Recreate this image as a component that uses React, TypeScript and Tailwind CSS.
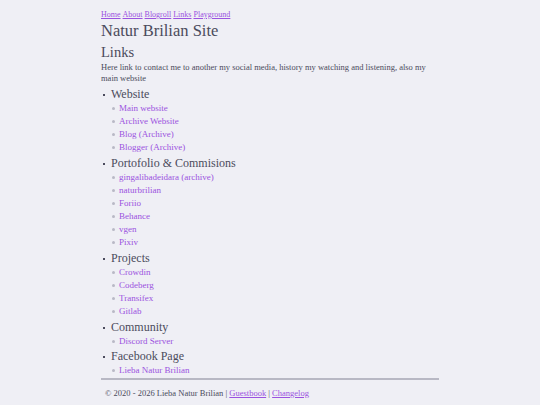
import React from "react";

const sections: { title: string; items: string[] }[] = [
  { title: "Website", items: ["Main website", "Archive Website", "Blog (Archive)", "Blogger (Archive)"] },
  {
    title: "Portofolio & Commisions",
    items: ["gingalibadeidara (archive)", "naturbrilian", "Foriio", "Behance", "vgen", "Pixiv"],
  },
  { title: "Projects", items: ["Crowdin", "Codeberg", "Transifex", "Gitlab"] },
  { title: "Community", items: ["Discord Server"] },
  { title: "Facebook Page", items: ["Lieba Natur Brilian"] },
];

export default function App() {
  return (
    <div
      className="min-h-screen w-full bg-[#efeff5] text-[#4b4b5c]"
      style={{ fontFamily: '"Liberation Serif", serif' }}
    >
      <div className="mx-auto w-[338px] pt-[10px]">
        <nav className="flex gap-[2px] text-[8px] leading-[10px]">
          {["Home", "About", "Blogroll", "Links", "Playground"].map((n) => (
            <a key={n} className="text-[#9b52e0] underline">
              {n}
            </a>
          ))}
        </nav>
        <h1 className="text-[16.5px] leading-[20px] mt-[1px]">Natur Brilian Site</h1>
        <h2 className="text-[14.5px] leading-[18px] mt-[2px]">Links</h2>
        <p className="text-[8.5px] leading-[11px] mt-[1px]">
          Here link to contact me to another my social media, history my watching and listening, also my main website
        </p>
        <div className="mt-[3px] flex flex-col">
          {sections.map((s, i) => (
            <div key={s.title} className="flex flex-col">
              <div className="flex items-center h-[15px]">
                <span className="w-[2px] h-[2px] bg-[#4b4b5c] ml-[2px] mr-[6px]" />
                <span className="text-[12px] leading-[15px]">{s.title}</span>
              </div>
              <div
                className={
                  i === sections.length - 1 ? "flex flex-col" : i === 3 ? "flex flex-col mb-[1px]" : "flex flex-col mb-[2px]"
                }
              >
                {s.items.map((it) => (
                  <div key={it} className="flex items-center h-[13px]">
                    <span className="w-[3px] h-[3px] rounded-full bg-[#b9b9c6] ml-[11px] mr-[4px]" />
                    <a className="text-[9px] leading-[13px] text-[#9b52e0]">{it}</a>
                  </div>
                ))}
              </div>
            </div>
          ))}
        </div>
        <div className="mt-[1px] h-[2px] bg-[#b8b8c4]" />
        <footer className="px-[4px] pt-[8px] text-[8.5px] leading-[10px]">
          © 2020 - 2026 Lieba Natur Brilian |{" "}
          <a className="text-[#9b52e0] underline">Guestbook</a> |{" "}
          <a className="text-[#9b52e0] underline">Changelog</a>
        </footer>
      </div>
    </div>
  );
}
